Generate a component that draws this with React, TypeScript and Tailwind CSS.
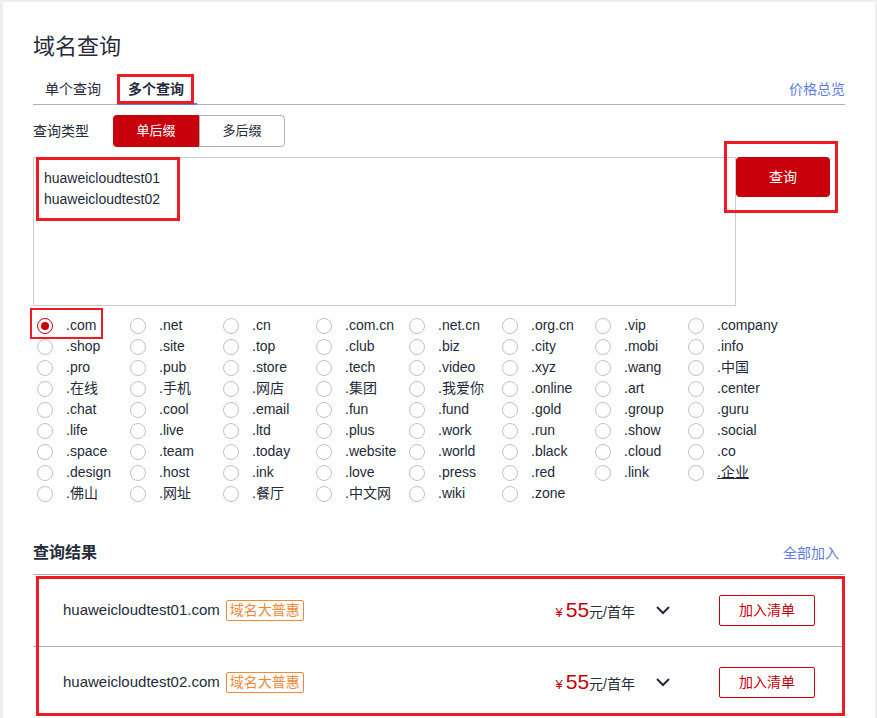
import React from "react";

// Suffix options shown in the radio grid, row by row
const suffixes = [
  ".com", ".net", ".cn", ".com.cn", ".net.cn", ".org.cn", ".vip", ".company",
  ".shop", ".site", ".top", ".club", ".biz", ".city", ".mobi", ".info",
  ".pro", ".pub", ".store", ".tech", ".video", ".xyz", ".wang", ".中国",
  ".在线", ".手机", ".网店", ".集团", ".我爱你", ".online", ".art", ".center",
  ".chat", ".cool", ".email", ".fun", ".fund", ".gold", ".group", ".guru",
  ".life", ".live", ".ltd", ".plus", ".work", ".run", ".show", ".social",
  ".space", ".team", ".today", ".website", ".world", ".black", ".cloud", ".co",
  ".design", ".host", ".ink", ".love", ".press", ".red", ".link", ".企业",
  ".佛山", ".网址", ".餐厅", ".中文网", ".wiki", ".zone",
];

const results = ["huaweicloudtest01.com", "huaweicloudtest02.com"];

const Chevron = () => (
  <svg width="14" height="9" viewBox="0 0 14 9" fill="none">
    <polyline points="1,1 7,7 13,1" stroke="#252b3a" strokeWidth="2" />
  </svg>
);

const Radio = ({ label, checked }: { label: string; checked?: boolean }) => (
  <div className="flex h-[21px] items-center">
    <span
      className={`flex h-4 w-4 items-center justify-center rounded-full border ${
        checked ? "border-[#c7000b]" : "border-[#c2c2c2]"
      }`}
    >
      {checked && <span className="h-2 w-2 rounded-full bg-[#c7000b]" />}
    </span>
    <span className={`ml-[13px] ${label === ".企业" ? "underline" : ""}`}>{label}</span>
  </div>
);

export default function App() {
  return (
    <div
      className="min-h-screen bg-[#eeeeee] pl-[3px] pr-[2px] pt-[2px] text-[#252b3a]"
      style={{ fontFamily: '"Liberation Sans", "Noto Sans CJK SC", sans-serif' }}
    >
      <div className="h-[716px] overflow-hidden bg-white px-[30px] pt-[30px]">
        <h1 className="text-[22px] leading-[30px]">域名查询</h1>

        {/* Tabs */}
        <div className="mt-[12px] flex h-[31px] items-stretch border-b border-[#adb0b8] text-[14px]">
          <div className="flex items-center px-3">单个查询</div>
          <div className="relative ml-[4px] flex w-[80px] items-center pl-[11px] font-bold">
            多个查询
            <span className="absolute bottom-[-1px] left-0 right-0 h-[2px] bg-[#5e7ce0]" />
            <span className="absolute left-0 top-0 h-[30px] w-[77px] border-[3px] border-[#ed1c24]" />
          </div>
          <a className="ml-auto flex items-center text-[#5e7ce0]">价格总览</a>
        </div>

        {/* Query type */}
        <div className="mt-[10px] flex items-center text-[14px]">
          <span className="w-[80px]">查询类型</span>
          <button className="h-[32px] w-[86px] rounded-l-sm bg-[#c7000b] text-[13px] text-white">
            单后缀
          </button>
          <button className="h-[32px] w-[86px] rounded-r-sm border border-[#adb0b8] text-[13px]">
            多后缀
          </button>
        </div>

        {/* Input + search */}
        <div className="mt-[10px] flex items-start">
          <div className="relative h-[149px] w-[703px] border border-[#cccccc] px-[10px] pt-[10px] text-[14px] leading-[21px]">
            <div>huaweicloudtest01</div>
            <div>huaweicloudtest02</div>
            <span className="absolute left-[2px] top-[-1px] h-[64px] w-[144px] border-[3px] border-[#ed1c24]" />
          </div>
          <div className="relative">
            <button className="h-[40px] w-[94px] rounded-sm bg-[#c7000b] text-[14px] text-white">
              查询
            </button>
            <span className="absolute left-[-12px] top-[-16px] h-[72px] w-[114px] border-[3px] border-[#ed1c24]" />
          </div>
        </div>

        {/* Suffix radios */}
        <div className="relative mt-[9px] grid grid-cols-[repeat(8,93px)] pl-[4px] text-[14px]">
          {suffixes.map((s, i) => (
            <Radio key={s} label={s} checked={i === 0} />
          ))}
          <span className="absolute left-[-3px] top-[-7px] h-[31px] w-[73px] border-2 border-[#ed1c24]" />
        </div>

        {/* Results */}
        <div className="mt-[37px] flex h-[24px] items-center">
          <h2 className="text-[16px] font-bold">查询结果</h2>
          <a className="ml-auto mr-[6px] text-[14px] text-[#5e7ce0]">全部加入</a>
        </div>

        <div className="relative mt-[9px] border-t border-[#adb0b8]">
          {results.map((d) => (
            <div
              key={d}
              className="flex h-[72px] items-center border-b border-[#adb0b8] pl-[30px] pr-[30px]"
            >
              <span className="text-[15px]">{d}</span>
              <span className="ml-[6px] flex h-[21px] items-center rounded-[2px] border border-[#ef8a3a] px-[3px] text-[14px] text-[#ef8a3a]">
                域名大普惠
              </span>
              <div className="ml-auto flex items-baseline text-[#c7000b]">
                <span className="text-[13px]">¥</span>
                <span className="ml-[3px] text-[21px] leading-none">55</span>
                <span className="text-[14px] text-[#252b3a]">元/首年</span>
              </div>
              <span className="ml-[21px] flex items-center">
                <Chevron />
              </span>
              <button className="ml-[49px] h-[31px] w-[96px] rounded-[2px] border border-[#c7000b] text-[14px] text-[#c7000b]">
                加入清单
              </button>
            </div>
          ))}
          <span className="absolute left-[3px] right-0 top-[1px] h-[140px] border-[3px] border-[#ed1c24]" />
        </div>
      </div>
    </div>
  );
}
